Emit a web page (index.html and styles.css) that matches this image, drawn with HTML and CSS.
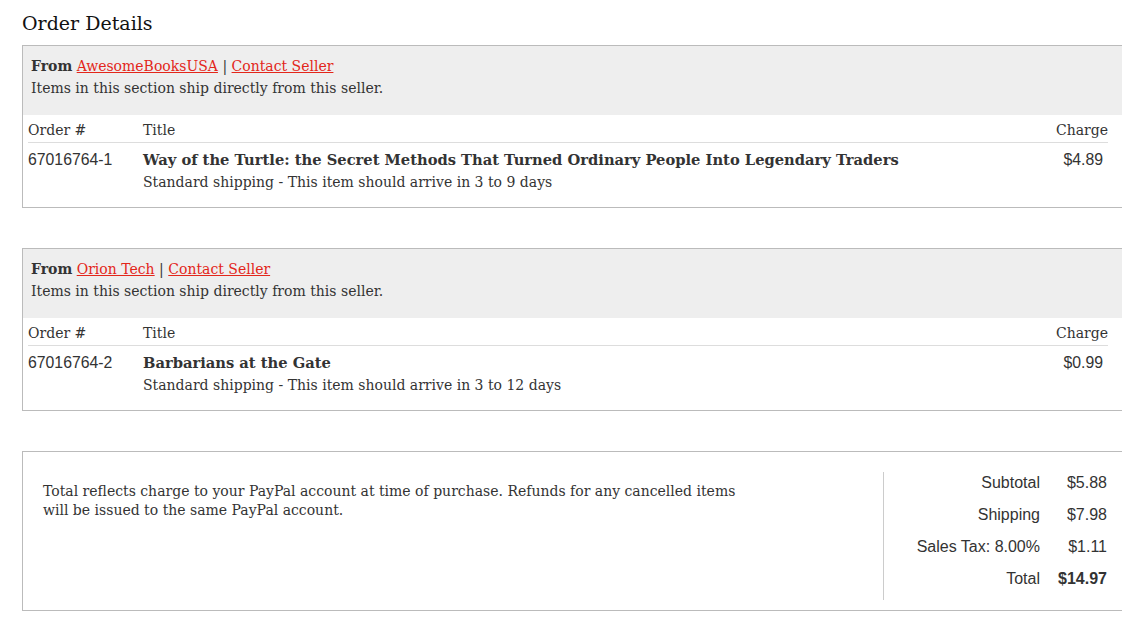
FILE: index.html
```html
<!DOCTYPE html>
<html lang="en">
<head>
    <meta charset="UTF-8">
    <meta name="viewport" content="width=device-width, initial-scale=1.0">
    <title>Order Details</title>
    <link rel="stylesheet" href="styles.css">
</head>
<body>
    <h1>Order Details</h1>

    <div class="seller-box">
        <div class="seller-head">
            <div><b>From</b> <a href="#">AwesomeBooksUSA</a> | <a href="#">Contact Seller</a></div>
            <div>Items in this section ship directly from this seller.</div>
        </div>
        <table class="items">
            <thead>
                <tr>
                    <th class="col-order">Order #</th>
                    <th>Title</th>
                    <th class="col-charge">Charge</th>
                </tr>
            </thead>
            <tbody>
                <tr>
                    <td class="col-order num">67016764-1</td>
                    <td>
                        <div class="item-title">Way of the Turtle: the Secret Methods That Turned Ordinary People Into Legendary Traders</div>
                        <div>Standard shipping - This item should arrive in 3 to 9 days</div>
                    </td>
                    <td class="col-charge num">$4.89</td>
                </tr>
            </tbody>
        </table>
    </div>

    <div class="seller-box">
        <div class="seller-head">
            <div><b>From</b> <a href="#">Orion Tech</a> | <a href="#">Contact Seller</a></div>
            <div>Items in this section ship directly from this seller.</div>
        </div>
        <table class="items">
            <thead>
                <tr>
                    <th class="col-order">Order #</th>
                    <th>Title</th>
                    <th class="col-charge">Charge</th>
                </tr>
            </thead>
            <tbody>
                <tr>
                    <td class="col-order num">67016764-2</td>
                    <td>
                        <div class="item-title">Barbarians at the Gate</div>
                        <div>Standard shipping - This item should arrive in 3 to 12 days</div>
                    </td>
                    <td class="col-charge num">$0.99</td>
                </tr>
            </tbody>
        </table>
    </div>

    <div class="summary-box">
        <div class="summary-note">
            <p>Total reflects charge to your PayPal account at time of purchase. Refunds for any cancelled items
            will be issued to the same PayPal account.</p>
        </div>
        <div class="summary-totals">
            <div class="label">Subtotal</div><div class="value">$5.88</div>
            <div class="label">Shipping</div><div class="value">$7.98</div>
            <div class="label">Sales Tax: 8.00%</div><div class="value">$1.11</div>
            <div class="label">Total</div><div class="value total">$14.97</div>
        </div>
    </div>
</body>
</html>
```

FILE: styles.css
```css
* {
    margin: 0;
    padding: 0;
    box-sizing: border-box;
}

body {
    font-family: "DejaVu Serif", Georgia, serif;
    font-size: 14px;
    color: #333;
    background-color: #fff;
    padding-left: 22px;
    overflow: hidden;
}

h1 {
    font-size: 19px;
    font-weight: normal;
    color: #111;
    line-height: 26px;
    padding-top: 10px;
    margin-bottom: 9px;
}

a {
    color: #e3261a;
}

.seller-box {
    width: 1120px;
    border: 1px solid #bbb;
    margin-bottom: 40px;
}

.seller-head {
    background-color: #eee;
    padding: 9px 8px 16px;
    line-height: 22px;
}

.items {
    width: 1080px;
    margin-left: 5px;
    border-collapse: collapse;
    line-height: 22px;
}

.items th {
    font-weight: normal;
    text-align: left;
    padding: 4px 0 1px;
    border-bottom: 1px solid #ddd;
}

.items td {
    vertical-align: top;
    padding: 6px 0 14px;
}

.col-order {
    width: 115px;
}

.items .col-charge {
    text-align: right;
    padding-right: 5px;
}

.items th.col-charge {
    padding-right: 0;
}

.num {
    font-family: "Liberation Sans", Arial, sans-serif;
    font-size: 15.8px;
}

.item-title {
    font-weight: bold;
    font-size: 14.7px;
}

.summary-box {
    width: 1120px;
    border: 1px solid #bbb;
    display: flex;
    padding: 20px 0 10px;
}

.summary-note {
    width: 860px;
    padding: 10px 20px 0;
    line-height: 19px;
}

.summary-note p {
    max-width: 700px;
}

.summary-totals {
    border-left: 1px solid #ccc;
    display: grid;
    grid-template-columns: 156px 67px;
    align-content: start;
    font-family: "Liberation Sans", Arial, sans-serif;
    font-size: 16px;
    line-height: 22px;
}

.summary-totals .label,
.summary-totals .value {
    text-align: right;
    padding-bottom: 10px;
}

.summary-totals .total {
    font-weight: bold;
}
```
